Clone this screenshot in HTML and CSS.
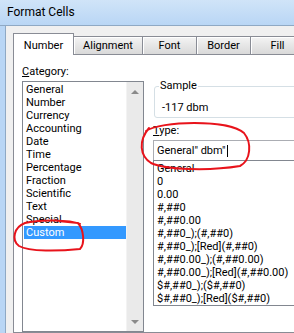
FILE: index.html
```html
<!DOCTYPE html>
<html>
<head>
<meta charset="utf-8">
<link rel="stylesheet" href="styles.css">
</head>
<body>
<div class="window">
  <div class="titlebar">Format Cells</div>
  <div class="frame">
    <div class="edge"></div>
    <div class="client">
      <div class="tabs">
        <div class="tab tab-number selected">Number</div>
        <div class="tab tab-alignment">Alignment</div>
        <div class="tab tab-font">Font</div>
        <div class="tab tab-border">Border</div>
        <div class="tab tab-fill">Fill</div>
      </div>
      <div class="panel">
        <div class="left">
          <div class="label"><u>C</u>ategory:</div>
          <div class="listbox">
            <ul class="items">
              <li>General</li>
              <li>Number</li>
              <li>Currency</li>
              <li>Accounting</li>
              <li>Date</li>
              <li>Time</li>
              <li>Percentage</li>
              <li>Fraction</li>
              <li>Scientific</li>
              <li>Text</li>
              <li>Special</li>
              <li class="selected">Custom</li>
            </ul>
            <div class="scrollbar">
              <span class="arrow up"></span>
              <span class="arrow down"></span>
            </div>
          </div>
        </div>
        <div class="right">
          <fieldset class="sample">
            <legend>Sample</legend>
            <div class="sample-value">-117 dbm</div>
          </fieldset>
          <div class="label type-label"><u>T</u>ype:</div>
          <div class="input">General" dbm"<span class="caret"></span></div>
          <ul class="typelist">
            <li>General</li>
            <li>0</li>
            <li>0.00</li>
            <li>#,##0</li>
            <li>#,##0.00</li>
            <li>#,##0_);(#,##0)</li>
            <li>#,##0_);[Red](#,##0)</li>
            <li>#,##0.00_);(#,##0.00)</li>
            <li>#,##0.00_);[Red](#,##0.00)</li>
            <li>$#,##0_);($#,##0)</li>
            <li>$#,##0_);[Red]($#,##0)</li>
          </ul>
        </div>
      </div>
    </div>
  </div>
  <svg class="marks" width="294" height="333" viewBox="0 0 294 333">
    <path d="M80 224 C70 220 40 219 25 223 C14 227 11 240 19 246 C29 252 60 251 80 249 C85 244 84 230 78 223 L58 221" />
    <path d="M146 131 C160 121 228 119 244 133 C252 143 251 160 240 166 C210 171 166 170 151 163 C140 156 138 141 149 128" />
  </svg>
</div>
</body>
</html>
```

FILE: styles.css
```css
* {
  box-sizing: border-box;
}

body {
  margin: 0;
  width: 294px;
  height: 333px;
  overflow: hidden;
  font-family: Roboto, "Open Sans", sans-serif;
  font-size: 11px;
  color: #000;
  background: #f0f0f0;
}

.window {
  position: relative;
  width: 420px;
  height: 333px;
  display: flex;
  flex-direction: column;
}

.titlebar {
  height: 26px;
  border-bottom: 1px solid #8fa9c4;
  background: linear-gradient(#d0e4f8, #b9d6f5);
  padding-left: 7px;
  line-height: 24px;
  font-size: 12px;
}

.frame {
  flex: 1;
  display: flex;
}

.edge {
  width: 6px;
  background: #b9d6f5;
  border-right: 1px solid #8fa9c4;
}

.client {
  flex: 1;
  background: #f0f0f0;
  padding: 7px 0 0 7px;
  display: flex;
  flex-direction: column;
}

.tabs {
  display: flex;
  align-items: flex-end;
  height: 21px;
}

.tab {
  height: 18px;
  border-top: 1px solid #898c95;
  border-right: 1px solid #898c95;
  background: linear-gradient(#f4f4f4, #e6e6e6 50%, #d9d9d9);
  box-shadow: inset 1px 1px 0 #fff;
  text-align: center;
  line-height: 17px;
}

.tab.selected {
  height: 22px;
  border-left: 1px solid #898c95;
  background: #fff;
  box-shadow: none;
  margin-bottom: -1px;
  padding-top: 5px;
  line-height: 14px;
  position: relative;
  z-index: 1;
}

.tab-number { width: 61px; }
.tab-alignment { width: 69px; }
.tab-font { width: 54px; }
.tab-border { width: 54px; }
.tab-fill { width: 54px; }

.panel {
  flex: 1;
  background: #fff;
  border: 1px solid #898c95;
  display: flex;
  align-items: flex-start;
  padding: 8px 0 0 8px;
}

.left {
  width: 122px;
  display: flex;
  flex-direction: column;
}

.label {
  line-height: 17px;
}

.label u {
  text-decoration-thickness: 1px;
}

.listbox {
  margin-top: 1px;
  height: 251px;
  border: 1px solid #828790;
  display: flex;
}

.items {
  flex: 1;
  list-style: none;
  margin: 0;
  padding: 1px 0 0 1px;
}

.items li,
.typelist li {
  height: 13px;
  line-height: 13px;
  white-space: nowrap;
}

.items li {
  padding-left: 2px;
}

.items li.selected {
  background: #3399ff;
  color: #fff;
}

.scrollbar {
  width: 17px;
  background: #eaeaea;
  border-left: 1px solid #f3f3f3;
  display: flex;
  flex-direction: column;
  justify-content: space-between;
  align-items: center;
  padding: 8px 0 7px;
}

.arrow {
  width: 0;
  height: 0;
  border-left: 4px solid transparent;
  border-right: 4px solid transparent;
}

.arrow.up {
  border-bottom: 4px solid #8a8a8a;
}

.arrow.down {
  border-top: 4px solid #8a8a8a;
}

.right {
  margin-left: 9px;
  width: 220px;
  display: flex;
  flex-direction: column;
}

.sample {
  margin: 16px 0 0 1px;
  border: 1px solid #d5dfe5;
  border-radius: 3px;
  padding: 0 0 0 4px;
  min-width: 0;
}

.sample legend {
  padding: 0 1px;
  line-height: 14px;
}

.sample-value {
  margin-top: 8px;
  padding: 0 0 3px 3px;
  line-height: 13px;
}

.type-label {
  margin-top: 6px;
  line-height: 13px;
}

.input {
  margin-top: 3px;
  height: 20px;
  border: 1px solid #abadb3;
  border-bottom: none;
  padding-left: 3px;
  line-height: 18px;
  white-space: nowrap;
  display: flex;
  align-items: center;
}

.caret {
  display: inline-block;
  width: 1px;
  height: 12px;
  background: #000;
  margin-left: 1px;
}

.typelist {
  list-style: none;
  margin: 0;
  height: 146px;
  border: 1px solid #828790;
  padding: 1px 0 0 3px;
}

.marks {
  position: absolute;
  top: 0;
  left: 0;
  z-index: 5;
  pointer-events: none;
}

.marks path {
  fill: none;
  stroke: #e8131b;
  stroke-width: 2;
  stroke-linecap: round;
  stroke-linejoin: round;
}
```
